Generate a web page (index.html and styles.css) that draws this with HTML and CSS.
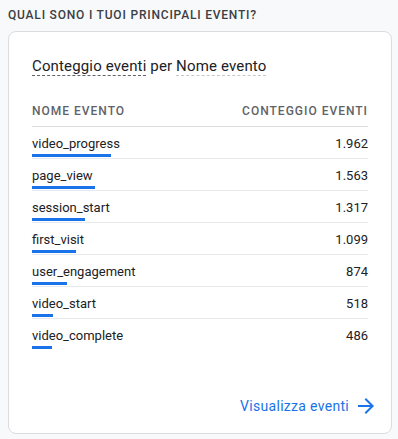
FILE: index.html
```html
<!DOCTYPE html>
<html lang="it">
<head>
<meta charset="utf-8">
<link rel="stylesheet" href="styles.css">
</head>
<body>
<div class="page">
  <h2 class="section-title">Quali sono i tuoi principali eventi?</h2>
  <div class="card">
    <div class="chart-title"><span class="metric">Conteggio eventi</span> per <span class="dim">Nome evento</span></div>
    <div class="table">
      <div class="thead">
        <div class="th">Nome evento</div>
        <div class="th">Conteggio eventi</div>
      </div>
      <div class="row"><div class="name"><div class="label">video_progress</div><div class="bar" style="width:79px"></div></div><div class="val">1.962</div></div>
      <div class="row"><div class="name"><div class="label">page_view</div><div class="bar" style="width:63px"></div></div><div class="val">1.563</div></div>
      <div class="row"><div class="name"><div class="label">session_start</div><div class="bar" style="width:53px"></div></div><div class="val">1.317</div></div>
      <div class="row"><div class="name"><div class="label">first_visit</div><div class="bar" style="width:44px"></div></div><div class="val">1.099</div></div>
      <div class="row"><div class="name"><div class="label">user_engagement</div><div class="bar" style="width:35px"></div></div><div class="val">874</div></div>
      <div class="row"><div class="name"><div class="label">video_start</div><div class="bar" style="width:21px"></div></div><div class="val">518</div></div>
      <div class="row"><div class="name"><div class="label">video_complete</div><div class="bar" style="width:20px"></div></div><div class="val">486</div></div>
    </div>
    <div class="footer">
      <a class="link" href="#">Visualizza eventi<svg class="arrow" viewBox="0 0 24 24" width="24" height="24"><path d="M12 4l-1.41 1.41L16.17 11H4v2h12.17l-5.58 5.59L12 20l8-8z"/></svg></a>
    </div>
  </div>
</div>
</body>
</html>
```
FILE: styles.css
```css
html, body {
  margin: 0;
  padding: 0;
  background: #f8f9fa;
  font-family: Roboto, "Liberation Sans", Arial, sans-serif;
  color: #202124;
}
.page {
  padding: 7px 6px 7px 8px;
}
.section-title {
  margin: 0;
  font-size: 12px;
  font-weight: 500;
  line-height: 16px;
  letter-spacing: 0.8px;
  text-transform: uppercase;
  color: #3c4043;
}
.card {
  margin-top: 8px;
  background: #fff;
  border: 1px solid #dadce0;
  border-radius: 8px;
  padding: 24px 23px 15px 23px;
}
.chart-title {
  font-size: 15px;
  line-height: 20px;
  letter-spacing: 0.15px;
  color: #202124;
}
.metric {
  border-bottom: 1px dashed #5f6368;
}
.dim {
  border-bottom: 1px dashed #c4c7c9;
}
.table {
  margin-top: 19px;
}
.thead {
  display: flex;
  justify-content: space-between;
  align-items: center;
  height: 31px;
  border-bottom: 1px solid #dadce0;
}
.th {
  font-size: 12px;
  font-weight: 500;
  letter-spacing: 1px;
  text-transform: uppercase;
  color: #5f6368;
}
.row {
  display: flex;
  justify-content: space-between;
  align-items: flex-start;
  height: 31px;
  border-bottom: 1px solid #e8eaed;
  font-size: 13px;
}
.row:last-child {
  border-bottom: none;
}
.label, .val {
  padding-top: 9px;
  line-height: 16px;
}
.bar {
  margin-top: 2px;
  height: 3px;
  background: #1a73e8;
}
.footer {
  margin-top: 44px;
  display: flex;
  justify-content: flex-end;
  margin-right: -10px;
}
.link {
  display: flex;
  align-items: center;
  gap: 5px;
  color: #1a73e8;
  text-decoration: none;
  font-size: 14px;
  font-weight: 400;
  line-height: 20px;
  letter-spacing: 0.3px;
}
.arrow {
  fill: #1a73e8;
}
```
